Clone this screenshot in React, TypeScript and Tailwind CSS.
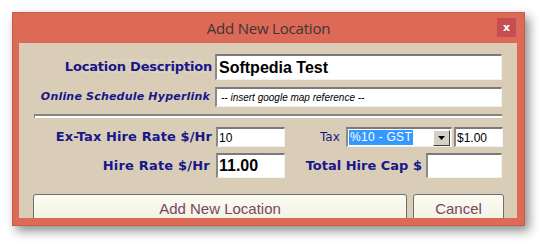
const label = "font-['DejaVu_Sans',sans-serif] font-bold text-[#17178a] whitespace-nowrap";
const sunken =
  "bg-white border-t-2 border-l-2 border-t-[#7a7a7a] border-l-[#8a8a8a] border-b border-r border-b-[#f2f2f2] border-r-[#f2f2f2]";

function Field({ className, children }: { className: string; children?: React.ReactNode }) {
  return <div className={`${sunken} flex items-center overflow-hidden ${className}`}>{children}</div>;
}

function WinButton({ className, text }: { className: string; text: string }) {
  return (
    <div
      className={`flex h-[30px] items-start justify-center rounded-t-[3px] border border-[#6f6f6f] bg-[linear-gradient(180deg,#fbfbf2_0%,#f2f1e2_100%)] pt-[3px] font-['Liberation_Sans',sans-serif] text-[15px] text-[#7a4560] ${className}`}
    >
      {text}
    </div>
  );
}

export default function App() {
  return (
    <div className="h-[247px] w-[545px] overflow-hidden bg-white pl-[12px] pt-[12px]">
      <div className="flex h-[214px] w-[513px] flex-col border border-[#c9594a] bg-[#dd6957] shadow-[4px_5px_10px_rgba(0,0,0,0.45)]">
        <div className="relative flex h-[30px] items-center justify-center">
          <span className="font-['Open_Sans',sans-serif] text-[15px] tracking-[-0.2px] text-[#3b3535]">Add New Location</span>
          <div className="absolute right-[8px] top-[5px] flex h-[19px] w-[19px] items-center justify-center bg-[#c74e50] font-['DejaVu_Sans',sans-serif] text-[11px] font-bold leading-none text-white">
            x
          </div>
        </div>

        <div className="relative mb-[7px] ml-[6px] mr-[7px] flex-1 overflow-hidden bg-[#d9cdb7]">
          <div className="pointer-events-none absolute left-[62px] top-[12px] font-['Liberation_Serif',serif] text-[22px] leading-none tracking-[1px] text-white/20">
            SOFTPEDIA
          </div>

          <div className="relative mt-[11px] flex h-[26px] items-center">
            <div className={`${label} w-[193px] text-right text-[13px] tracking-[-0.2px]`}>Location Description</div>
            <Field className="ml-[3px] h-[26px] w-[287px] pl-[2px] font-['Liberation_Sans',sans-serif] text-[16px] font-bold text-black">
              Softpedia Test
            </Field>
          </div>

          <div className="mt-[7px] flex h-[20px] items-center">
            <div className={`${label} w-[191px] text-right text-[11px] italic tracking-[0.2px]`}>Online Schedule Hyperlink</div>
            <Field className="ml-[5px] h-[20px] w-[287px] pl-[4px] font-['Liberation_Sans',sans-serif] text-[10px] italic text-black">
              -- insert google map reference --
            </Field>
          </div>

          <div className="ml-[15px] mt-[7px] h-[4px] w-[468px] border-l border-t-2 border-[#858585] bg-white" />

          <div className="mt-[9px] flex h-[20px] items-center">
            <div className={`${label} w-[193px] text-right text-[13px] tracking-[0.1px]`}>Ex-Tax Hire Rate $/Hr</div>
            <Field className="ml-[4px] h-[20px] w-[69px] pl-[1px] font-['Liberation_Sans',sans-serif] text-[12px] text-black">10</Field>
            <div className="ml-[35px] w-[22px] font-['DejaVu_Sans',sans-serif] text-[12px] text-[#17178a]">Tax</div>
            <Field className="ml-[4px] h-[20px] w-[106px] pl-[1px] pr-[1px]">
              <span className="bg-[#3399ff] px-[1px] font-['Liberation_Sans',sans-serif] text-[12px] leading-[15px] tracking-[0.3px] text-white">
                %10 - GST
              </span>
              <div className="ml-auto flex h-[16px] w-[17px] items-center justify-center border border-b-[#404040] border-l-[#ffffff] border-r-[#404040] border-t-[#ffffff] bg-[#d4d0c8]">
                <svg width="7" height="4" viewBox="0 0 7 4">
                  <path d="M0 0h7L3.5 4z" fill="#000" />
                </svg>
              </div>
            </Field>
            <Field className="ml-[2px] h-[20px] w-[49px] pl-[1px] font-['Liberation_Sans',sans-serif] text-[12px] text-black">$1.00</Field>
          </div>

          <div className="mt-[6px] flex h-[25px] items-center">
            <div className={`${label} w-[191px] text-right text-[13px] tracking-[0.2px]`}>Hire Rate $/Hr</div>
            <Field className="ml-[6px] h-[25px] w-[69px] pl-[1px] font-['Liberation_Sans',sans-serif] text-[16px] font-bold text-black">11.00</Field>
            <div className={`${label} ml-[20px] w-[117px] text-right text-[13px] tracking-[0px]`}>Total Hire Cap $</div>
            <Field className="ml-[4px] h-[25px] w-[76px]" />
          </div>

          <div className="mt-[16px] flex">
            <WinButton className="ml-[14px] w-[374px]" text="Add New Location" />
            <WinButton className="ml-[6px] w-[91px]" text="Cancel" />
          </div>
        </div>
      </div>
    </div>
  );
}
